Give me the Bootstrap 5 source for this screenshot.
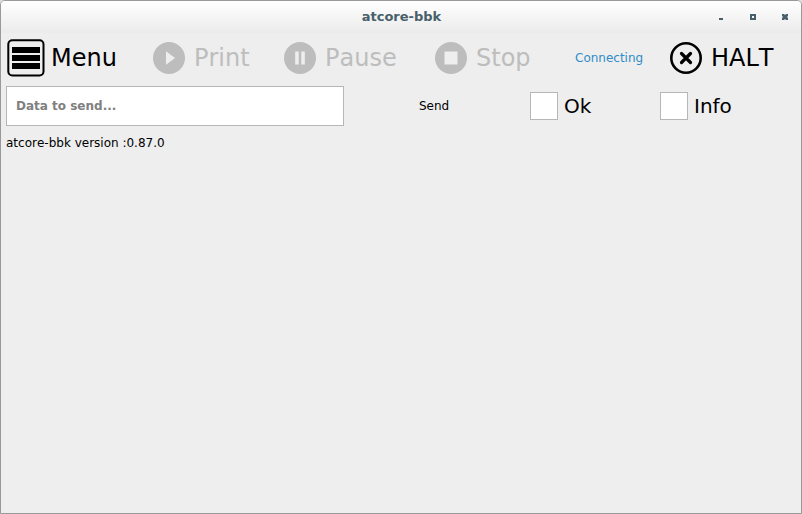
<!DOCTYPE html>
<html lang="en">
<head>
<meta charset="utf-8">
<meta name="viewport" content="width=device-width, initial-scale=1">
<title>atcore-bbk</title>
<link rel="stylesheet" href="https://cdn.jsdelivr.net/npm/bootstrap@5.3.0/dist/css/bootstrap.min.css">
<style>
  body { font-family: "DejaVu Sans", sans-serif; font-size: 12px; line-height: 16px; font-kerning: none; color: #000; background: #ddd; }
  .app-window { background: #eee; border: 1px solid #999; border-radius: 5px 5px 0 0; }
  .title-bar { height: 32px; background: linear-gradient(#fff, #ebebeb); color: #48606a; }
  .title-bar h1 { font-size: 13px; line-height: 32px; padding-left: 1px; }
  .window-controls { right: 0; top: 0; height: 32px; }
  .window-controls .btn { width: 32px; color: #48606a; }
  .window-controls svg { width: 6px; height: 6px; }
  .tool-grid { grid-template-columns: 147fr 131fr 151fr 140fr 95fr 126fr; padding: 5px; }
  .command-grid { grid-template-columns: 338fr 180fr 130fr 142fr; padding: 3px 5px 0; }
  .tool-btn { --bs-btn-disabled-opacity: 1; --bs-btn-disabled-color: #bdbdbd; font-size: 24px; line-height: 40px; font-kerning: none; color: #000; gap: 9px; }
  .menu-btn { gap: 5px; }
  .status-text { color: #308cc6; }
  .send-btn { font-size: 12px; color: #000; }
  .data-input, .data-input:focus { height: 40px; padding: 0 9px; border: 1px solid #b6b6b6; font-size: 12px; font-weight: bold; }
  .data-input::placeholder { color: #808080; }
  .option { font-size: 20px; gap: 6px; padding-left: 6px; }
  .option .form-check-input { width: 28px; height: 28px; border: 1px solid #b6b6b6; }
  .log { padding: 9px 5px; }
</style>
<script src="https://cdn.jsdelivr.net/npm/bootstrap@5.3.0/dist/js/bootstrap.bundle.min.js"></script>
</head>
<body>
<div class="app-window min-vh-100 d-flex flex-column overflow-hidden">
  <header class="title-bar position-relative">
    <h1 class="fw-bold text-center m-0">atcore-bbk</h1>
    <div class="window-controls position-absolute d-flex">
      <button type="button" class="btn border-0 p-0" aria-label="Minimize"><svg class="d-block mx-auto" viewBox="0 0 6 6" shape-rendering="crispEdges"><path fill="currentColor" d="M1 4h4v2H1z"/></svg></button>
      <button type="button" class="btn border-0 p-0" aria-label="Maximize"><svg class="d-block mx-auto" viewBox="0 0 6 6" shape-rendering="crispEdges"><path fill="currentColor" fill-rule="evenodd" d="M0 0h6v6H0zM2 2v2h2V2z"/></svg></button>
      <button type="button" class="btn border-0 p-0" aria-label="Close"><svg class="d-block mx-auto" viewBox="0 0 6 6"><path fill="currentColor" d="M0 0h2l1 1 1-1h2v2L5 3l1 1v2H4L3 5 2 6H0V4l1-1-1-1z"/></svg></button>
    </div>
  </header>

  <nav class="tool-grid d-grid align-items-center" aria-label="Printer controls">
    <button type="button" class="btn tool-btn menu-btn border-0 p-0 d-flex align-items-center">
      <svg width="40" height="40" viewBox="0 0 40 40"><rect x="2.3" y="2.3" width="35.2" height="35.2" rx="4" fill="none" stroke="#000" stroke-width="2"/><path d="M6 9h28v6H6zM6 17h28v6H6zM6 25h28v6H6z"/></svg>
      Menu
    </button>
    <button type="button" class="btn tool-btn border-0 p-0 d-flex align-items-center" disabled>
      <svg width="32" height="32" viewBox="0 0 32 32"><circle cx="16" cy="16" r="16" fill="#bdbdbd"/><path fill="#eee" d="M13 9.3v13.4l9-6.7z"/></svg>
      Print
    </button>
    <button type="button" class="btn tool-btn border-0 p-0 d-flex align-items-center" disabled>
      <svg width="32" height="32" viewBox="0 0 32 32"><circle cx="16" cy="16" r="16" fill="#bdbdbd"/><path fill="#eee" d="M11.2 9.5h3.5v13h-3.5zM17.3 9.5h3.5v13h-3.5z"/></svg>
      Pause
    </button>
    <button type="button" class="btn tool-btn border-0 p-0 d-flex align-items-center" disabled>
      <svg width="32" height="32" viewBox="0 0 32 32"><circle cx="16" cy="16" r="16" fill="#bdbdbd"/><path fill="#eee" d="M9.5 9.5h13v13h-13z"/></svg>
      Stop
    </button>
    <span class="status-text" role="status">Connecting</span>
    <button type="button" class="btn tool-btn border-0 p-0 d-flex align-items-center">
      <svg width="32" height="32" viewBox="0 0 32 32" fill="none" stroke="#000"><circle cx="16" cy="16" r="14.7" stroke-width="2.6"/><path stroke-width="3.2" stroke-linecap="round" d="M11.5 11.5l9 9M20.5 11.5l-9 9"/></svg>
      HALT
    </button>
  </nav>

  <form class="command-grid d-grid align-items-center">
    <input type="text" class="data-input form-control rounded-0 shadow-none" placeholder="Data to send..." aria-label="Data to send">
    <button type="button" class="btn send-btn border-0">Send</button>
    <div class="option d-flex align-items-center">
      <input class="form-check-input rounded-0 m-0" type="checkbox" id="show-ok"><label for="show-ok">Ok</label>
    </div>
    <div class="option d-flex align-items-center">
      <input class="form-check-input rounded-0 m-0" type="checkbox" id="show-info"><label for="show-info">Info</label>
    </div>
  </form>

  <main class="log flex-grow-1">atcore-bbk version :0.87.0</main>
</div>
</body>
</html>
